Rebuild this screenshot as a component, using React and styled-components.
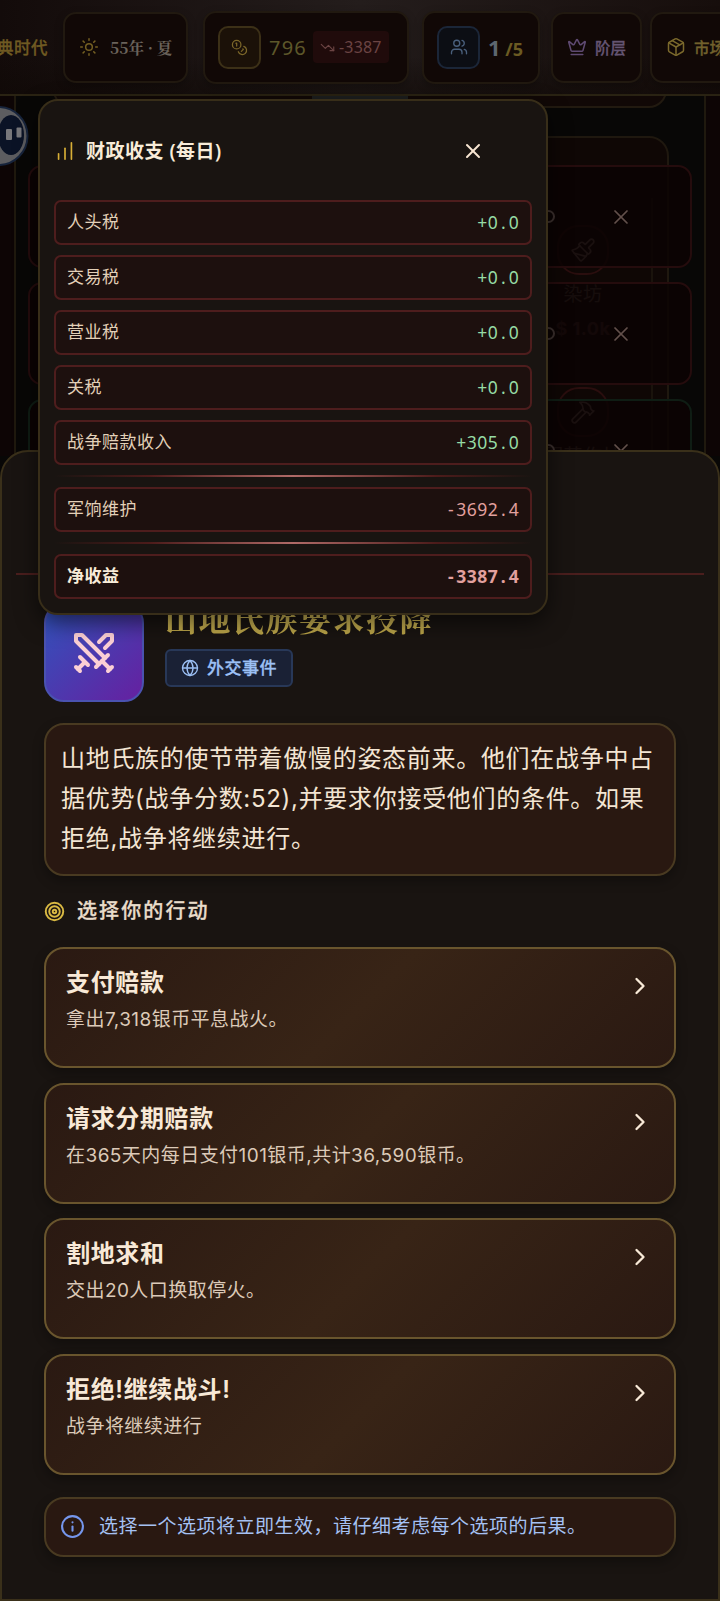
import React from 'react'
import styled, { createGlobalStyle, css } from 'styled-components'
import {
  ChartNoAxesColumnIncreasing,
  ChevronRight,
  Coins,
  Crown,
  Globe,
  Info,
  Package,
  Paintbrush,
  Hammer,
  Sun,
  Swords,
  Target,
  TrendingDown,
  Users,
  X,
} from 'lucide-react'

const incomes = [
  { label: '人头税', value: '+0.0' },
  { label: '交易税', value: '+0.0' },
  { label: '营业税', value: '+0.0' },
  { label: '关税', value: '+0.0' },
  { label: '战争赔款收入', value: '+305.0' },
]

const options = [
  { title: '支付赔款', text: '拿出7,318银币平息战火。' },
  { title: '请求分期赔款', text: '在365天内每日支付101银币,共计36,590银币。' },
  { title: '割地求和', text: '交出20人口换取停火。' },
  { title: '拒绝!继续战斗!', text: '战争将继续进行' },
]

// every character takes the same width, so the columns line up
const Amount = ({ value, ...rest }) => (
  <AmountText {...rest}>
    {value.split('').map((char, index) => (
      <span key={index}>{char}</span>
    ))}
  </AmountText>
)

const FinanceRow = ({ label, value, total }) => (
  <Row $total={total}>
    <span>{label}</span>
    <Amount value={value} $negative={value[0] === '-'} />
  </Row>
)

const Header = () => (
  <Bar>
    <Era>古典时代</Era>
    <Chip $width='125px' $gap='11px' $after='15px'>
      <Sun size={20} strokeWidth={1.8} color='#745f22' />
      <Season>55年 · 夏</Season>
    </Chip>
    <Chip $width='206px' $tall $gap='8px' $after='13px'>
      <IconTile>
        <Coins size={17} strokeWidth={1.8} />
      </IconTile>
      <Silver>796</Silver>
      <Trend>
        <TrendingDown size={15} strokeWidth={1.8} />
        -3387
      </Trend>
    </Chip>
    <Chip $width='118px' $tall $gap='8px' $after='11px'>
      <IconTile $blue>
        <Users size={18} strokeWidth={1.8} />
      </IconTile>
      <Population>
        1 <small>/5</small>
      </Population>
    </Chip>
    <Chip $width='91px' $gap='8px' $after='8px'>
      <Crown size={20} strokeWidth={1.8} color='#5f4a72' />
      <ChipLabel $color='#655573'>阶层</ChipLabel>
    </Chip>
    <Chip $width='91px' $gap='8px' $after='0'>
      <Package size={20} strokeWidth={1.8} color='#7b692c' />
      <ChipLabel $color='#71602c'>市场</ChipLabel>
    </Chip>
  </Bar>
)

const Avatar = () => (
  <AvatarSvg width='30' height='60' viewBox='0 0 30 60'>
    <circle cx='-1.500' cy='30' r='29' fill='#5d5d60' stroke='#17243c' strokeWidth='2' />
    <ellipse cx='11' cy='29' rx='13' ry='20' fill='#0b1326' />
    <rect x='6' y='23' width='6' height='11' rx='1' fill='#77777b' />
    <rect x='16.500' y='21.500' width='5' height='10' rx='1' fill='#77777b' />
  </AvatarSvg>
)

const Board = () => (
  <BoardArea>
    <BoardFrame />
    <TopPanel />
    <Tab />
    <BuildPanel>
      <Building $top='87px'>
        <Ring>
          <Paintbrush size={26} strokeWidth={1.5} />
        </Ring>
        <span>染坊</span>
        <small>$ 1.0k</small>
      </Building>
      <Building $top='249px'>
        <Ring>
          <Hammer size={26} strokeWidth={1.5} />
        </Ring>
        <span>军营作坊</span>
      </Building>
    </BuildPanel>
    <Notices>
      <Notice>
        <Dot />
        <X size={24} strokeWidth={1.7} />
      </Notice>
      <Notice>
        <Dot />
        <X size={24} strokeWidth={1.7} />
      </Notice>
      <Notice $green>
        <Dot />
        <X size={24} strokeWidth={1.7} />
      </Notice>
    </Notices>
    <Avatar />
  </BoardArea>
)

const EventSheet = () => (
  <Sheet>
    <SheetHandle />
    <SheetBody>
      <EventHead>
        <EventIcon>
          <Swords size={48} strokeWidth={2} />
        </EventIcon>
        <div>
          <EventTitle>山地氏族要求投降</EventTitle>
          <Badge>
            <Globe size={18} strokeWidth={1.8} />
            <span>外交事件</span>
          </Badge>
        </div>
      </EventHead>
      <Description>
        山地氏族的使节带着傲慢的姿态前来。他们在战争中占据优势(战争分数:52),并要求你接受他们的条件。如果拒绝,战争将继续进行。
      </Description>
      <SectionTitle>
        <Target size={21} strokeWidth={2.2} color='#d9b943' />
        选择你的行动
      </SectionTitle>
      <OptionList>
        {options.map((option) => (
          <Option key={option.title}>
            <div>
              <h3>{option.title}</h3>
              <p>{option.text}</p>
            </div>
            <ChevronRight size={28} strokeWidth={2} />
          </Option>
        ))}
      </OptionList>
      <Hint>
        <Info size={25} strokeWidth={2} />
        <span>选择一个选项将立即生效，请仔细考虑每个选项的后果。</span>
      </Hint>
    </SheetBody>
  </Sheet>
)

const FinancePopover = () => (
  <Popover>
    <PopoverHead>
      <ChartNoAxesColumnIncreasing size={22} strokeWidth={1.8} />
      <h2>财政收支 (每日)</h2>
      <X size={24} strokeWidth={2} />
    </PopoverHead>
    <Rows>
      {incomes.map((item) => (
        <FinanceRow key={item.label} {...item} />
      ))}
    </Rows>
    <Divider />
    <FinanceRow label='军饷维护' value='-3692.4' />
    <Divider />
    <FinanceRow label='净收益' value='-3387.4' total />
  </Popover>
)

const App = () => (
  <Screen>
    <GlobalStyle />
    <Header />
    <Board />
    <EventSheet />
    <FinancePopover />
  </Screen>
)

const GlobalStyle = createGlobalStyle`
  * {
    box-sizing: border-box;
  }
  body {
    margin: 0;
    background: #090806;
    font-family: Inter, 'Noto Sans CJK SC', sans-serif;
    letter-spacing: 0.5px;
  }
  h1, h2, h3, p {
    margin: 0;
  }
  svg {
    display: block;
    flex-shrink: 0;
  }
`

const serif = css`
  font-family: 'Noto Serif CJK SC', 'Noto Serif SC', 'Liberation Serif',
    'Noto Sans CJK SC', serif;
`

const Screen = styled.div`
  position: relative;
  width: 720px;
  height: 1601px;
  overflow: hidden;
  background: #080706;
`

// header

const Bar = styled.header`
  display: flex;
  align-items: center;
  height: 96px;
  margin-left: -20px;
  width: 760px;
  border-bottom: 2px solid #2a2313;
  background:
    linear-gradient(180deg, transparent 60%, rgba(14, 8, 5, 0.5)),
    linear-gradient(90deg, #120a09 0%, #241d1c 50%, #160d0b 100%);
`

const Era = styled.div`
  width: 68px;
  margin-right: 15px;
  color: #6f5a22;
  font-size: 16.500px;
  font-weight: 500;
  -webkit-text-stroke: 0.3px;
  white-space: nowrap;
`

const Chip = styled.div`
  display: flex;
  align-items: center;
  flex-shrink: 0;
  gap: ${(props) => props.$gap};
  width: ${(props) => props.$width};
  height: ${(props) => (props.$tall ? 73 : 71)}px;
  margin-right: ${(props) => props.$after};
  padding-left: ${(props) => (props.$tall ? 13 : 14)}px;
  border: 2px solid #211910;
  border-radius: 13px;
  background: #110806;
  box-shadow: 0 3px 8px rgba(0, 0, 0, 0.25);
`

const Season = styled.span`
  ${serif}
  color: #6a625a;
  font-size: 15.500px;
  font-weight: 700;
  letter-spacing: 0;
  white-space: nowrap;
`

const ChipLabel = styled.span`
  color: ${(props) => props.$color};
  font-size: 15.500px;
  font-weight: 500;
  letter-spacing: 0;
  -webkit-text-stroke: 0.3px;
  white-space: nowrap;
`

const IconTile = styled.div`
  display: grid;
  place-items: center;
  width: 43px;
  height: 43px;
  border: 2px solid ${(props) => (props.$blue ? '#1b2638' : '#3c3017')};
  border-radius: 10px;
  background: ${(props) => (props.$blue ? '#0c0e14' : '#1b1108')};
  color: ${(props) => (props.$blue ? '#4a607d' : '#7b6629')};
`

const Silver = styled.span`
  font-family: 'Noto Sans', sans-serif;
  font-size: 20px;
  color: #5d572a;
  letter-spacing: 1.2px;
`

const Trend = styled.span`
  display: flex;
  align-items: center;
  gap: 4px;
  height: 32px;
  margin-left: -2px;
  padding: 0 7px;
  border-radius: 4px;
  background: #200b0b;
  color: #6b4443;
  font-family: 'Noto Sans', sans-serif;
  font-size: 16px;
  letter-spacing: 0.2px;
`

const Population = styled.span`
  font-family: 'Noto Sans', sans-serif;
  font-size: 22px;
  font-weight: 700;
  color: #5d666f;
  letter-spacing: 0;
  word-spacing: -1px;
  white-space: nowrap;

  small {
    font-size: 18px;
    color: #6b5a22;
  }
`

// board behind the sheet, its layers lie over each other

const BoardArea = styled.main`
  position: relative;
  height: 360px;
  overflow: hidden;
  background: #080706;
`

const BoardFrame = styled.div`
  position: absolute;
  inset: 0 14px;
  border: solid #1f190e;
  border-width: 0 2px;
  box-shadow: 0 0 0 20px #0d0505;
`

const TopPanel = styled.div`
  position: absolute;
  top: -30px;
  left: 53px;
  width: 614px;
  height: 42px;
  border: 2px solid #221a10;
  border-radius: 0 0 18px 18px;
  background: #110806;
`

const Tab = styled.div`
  position: absolute;
  top: 0;
  left: 312px;
  width: 96px;
  height: 4px;
  background: #1c1e1e;
`

const BuildPanel = styled.section`
  position: absolute;
  top: 40px;
  left: 53px;
  width: 616px;
  height: 340px;
  border: 2px solid #1f180f;
  border-radius: 20px;
  background: #0f0705;

  &::after {
    content: '';
    position: absolute;
    top: 60px;
    right: 14px;
    bottom: 0;
    border-right: 2px solid #1a130c;
  }
`

const Building = styled.div`
  position: absolute;
  top: ${(props) => props.$top};
  left: 463px;
  width: 130px;
  display: flex;
  flex-direction: column;
  align-items: center;
  gap: 4px;
  color: #5f514a;
  font-size: 19px;
  white-space: nowrap;

  small {
    font-size: 18px;
    font-weight: 700;
    color: #4a2a2a;
    margin-top: 8px;
  }
`

const Ring = styled.div`
  display: grid;
  place-items: center;
  width: 52px;
  height: 50px;
  border: 2px solid #2a0e0e;
  border-radius: 22px;
  color: #7a6560;
`

const Notices = styled.div`
  position: absolute;
  top: 69px;
  left: 28px;
  width: 664px;
  display: flex;
  flex-direction: column;
  gap: 14px;
`

const Notice = styled.div`
  display: flex;
  align-items: center;
  justify-content: flex-end;
  gap: 54px;
  height: 103px;
  padding-right: 57px;
  border: 2px solid ${(props) => (props.$green ? '#0f1d14' : '#250c0d')};
  border-radius: 14px;
  background: rgba(12, 3, 3, 0.87);
  color: #62504b;
`

const Dot = styled.span`
  width: 13px;
  height: 13px;
  border: 2px solid #3c302e;
  border-radius: 50%;
`

const AvatarSvg = styled.svg`
  position: absolute;
  top: 10px;
  left: 0;
`

// event sheet

const Sheet = styled.section`
  position: absolute;
  top: 450px;
  left: 0;
  width: 720px;
  height: 1151px;
  border: 2px solid #3a301a;
  border-radius: 28px 28px 0 0;
  background: #191411;
`

const SheetHandle = styled.div`
  height: 123px;
  margin: 0 14px;
  border-bottom: 2px solid #4a1e1d;
`

const SheetBody = styled.div`
  padding: 28px 42px 0;
`

const EventHead = styled.div`
  display: flex;
  gap: 21px;
  height: 120px;
`

const EventIcon = styled.div`
  display: grid;
  place-items: center;
  width: 100px;
  height: 99px;
  border: 2px solid #4a52b0;
  border-radius: 20px;
  background: linear-gradient(135deg, #3153bd, #6620a0);
  color: #fbd0d5;
`

const EventTitle = styled.h1`
  ${serif}
  height: 46px;
  margin-top: -5px;
  margin-bottom: 5px;
  line-height: 38px;
  background: linear-gradient(180deg, #e0c864, #b39c40);
  -webkit-background-clip: text;
  background-clip: text;
  color: transparent;
  font-size: 32px;
  font-weight: 700;
  letter-spacing: 1.5px;
`

const Badge = styled.div`
  display: inline-flex;
  align-items: center;
  gap: 8px;
  width: 128px;
  height: 38px;
  padding-left: 14px;
  border: 2px solid #283858;
  border-radius: 6px;
  background: #1a2135;
  color: #9cc0f5;
  font-size: 17px;
  font-weight: 500;
  -webkit-text-stroke: 0.3px;

  span {
    margin-top: -4px;
  }
`

const panel = css`
  border: 2px solid #493a21;
  border-radius: 20px;
  background: #291811;
  box-shadow: 0 5px 12px rgba(0, 0, 0, 0.3);
`

const Description = styled.p`
  ${panel}
  height: 153px;
  padding: 14px 8px 0 15px;
  color: #f3e5d3;
  font-size: 24px;
  letter-spacing: 0.7px;
  line-height: 40.200px;
`

const SectionTitle = styled.h2`
  display: flex;
  align-items: center;
  gap: 12px;
  height: 71px;
  color: #e9dcca;
  font-size: 20px;
  font-weight: 500;
  letter-spacing: 2.1px;
  line-height: 67px;
  -webkit-text-stroke: 0.3px;
`

const OptionList = styled.div`
  display: flex;
  flex-direction: column;
  gap: 14.500px;
`

const Option = styled.button`
  display: flex;
  align-items: flex-start;
  justify-content: space-between;
  height: 121px;
  padding: 15px 20px 0 20px;
  border: 2px solid #69552d;
  border-radius: 20px;
  background: linear-gradient(135deg, #2a1912 0%, #382416 50%, #2a1912 100%);
  box-shadow: 0 5px 12px rgba(0, 0, 0, 0.3);
  color: #f8e9d7;
  font-family: inherit;
  text-align: left;

  h3 {
    font-size: 24px;
    font-weight: 600;
    letter-spacing: 0.65px;
    line-height: 38px;
  }
  p {
    color: #dccab8;
    font-size: 19px;
    letter-spacing: 0.45px;
    line-height: 35px;
  }
  svg {
    margin-top: 8px;
  }
`

const Hint = styled.div`
  ${panel}
  display: flex;
  align-items: center;
  gap: 14px;
  height: 60px;
  margin-top: 22px;
  padding-left: 14px;
  color: #7596ec;

  span {
    margin-top: -4px;
    color: #a5c1f3;
    font-size: 19px;
    letter-spacing: 0.5px;
  }
`

// finance popover

const Popover = styled.aside`
  position: absolute;
  top: 99px;
  left: 38px;
  width: 510px;
  height: 516px;
  padding: 0 14px;
  border: 2px solid #382e19;
  border-radius: 20px;
  background: #191411;
  box-shadow: 0 8px 22px rgba(0, 0, 0, 0.55);
`

const PopoverHead = styled.div`
  display: flex;
  align-items: center;
  height: 99px;
  color: #d8af36;

  h2 {
    margin-left: 10px;
    margin-right: auto;
    color: #f8ecd9;
    font-family: 'Noto Sans', 'Noto Sans CJK SC', sans-serif;
    font-size: 19px;
    font-weight: 600;
    letter-spacing: 0.5px;
    line-height: 26px;
  }
  svg:last-child {
    margin-right: 47px;
    color: #f8e6d2;
  }
`

const Rows = styled.div`
  display: flex;
  flex-direction: column;
  gap: 10px;
`

const Row = styled.div`
  display: flex;
  align-items: center;
  justify-content: space-between;
  height: 45px;
  padding: 0 11px 2px;
  border: 2px solid #4e1d1d;
  border-radius: 7px;
  background: #1d100e;
  color: ${(props) => (props.$total ? '#f8ecd9' : '#e3d0b8')};
  font-size: 17px;
  font-weight: ${(props) => (props.$total ? 700 : 400)};
  line-height: 38px;
`

const AmountText = styled.span`
  display: flex;
  color: ${(props) => (props.$negative ? '#e2a09e' : '#96dba5')};
  font-family: 'Noto Sans', sans-serif;
  font-size: 17.500px;
  letter-spacing: 0;

  span {
    width: 10.500px;
    text-align: center;
  }
`

const Divider = styled.div`
  height: 2px;
  margin: 10px 0;
  background: linear-gradient(90deg, transparent, #4c1b1a 20%, #b06a67 50%, #4c1b1a 80%, transparent);
`

export default App
